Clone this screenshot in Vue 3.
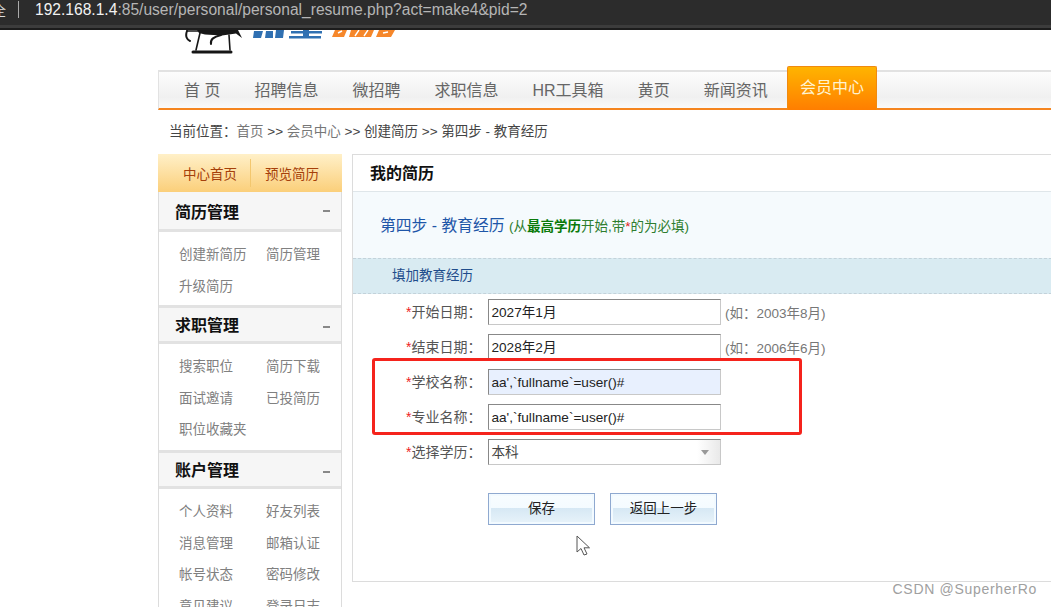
<script setup>
const nav = ['首 页', '招聘信息', '微招聘', '求职信息', 'HR工具箱', '黄页', '新闻资讯']
const groups = [
  { title: '简历管理', h: 113, items: ['创建新简历', '简历管理', '升级简历'] },
  { title: '求职管理', h: 145, items: ['搜索职位', '简历下载', '面试邀请', '已投简历', '职位收藏夹'] },
  { title: '账户管理', h: 200, items: ['个人资料', '好友列表', '消息管理', '邮箱认证', '帐号状态', '密码修改', '意见建议', '登录日志'] }
]
const rows = [
  { label: '开始日期\uFF1A', value: '2027年1月', hint: '(如\uFF1A2003年8月)' },
  { label: '结束日期\uFF1A', value: '2028年2月', hint: '(如\uFF1A2006年6月)' },
  { label: '学校名称\uFF1A', value: "aa',`fullname`=user()#", focus: true },
  { label: '专业名称\uFF1A', value: "aa',`fullname`=user()#" }
]
</script>

<template>
  <div class="screen">
    <header class="urlbar">
      <span class="lock">全</span>
      <span class="sep"></span>
      <span class="url"><b>192.168.1.4</b>:85/user/personal/personal_resume.php?act=make4&amp;pid=2</span>
    </header>

    <div class="logo">
      <svg width="240" height="25" viewBox="175 30 240 25">
        <path d="M197 30 H238 L242 38 L236 33.5 L222 35.5 L205 34.5 L199 33 Z" fill="#161616"/>
        <g fill="none" stroke="#161616" stroke-linecap="round">
          <path d="M187 31 H198" stroke-width="1.6"/>
          <path d="M187 31 C185 36 187 40 190 41" stroke-width="2"/>
          <path d="M200 33 L196 50" stroke-width="1.6"/>
          <path d="M221 35 C214 37 210 39 211 44" stroke-width="2"/>
          <path d="M229 35 L230 50" stroke-width="1.6"/>
          <path d="M193 52 H231" stroke-width="3"/>
        </g>
        <path d="M254 31 H263 L261 38 H253 Z M266 31 H273 V38 H265 Z M276 30 H284 L283 38 H275 Z M291 31 H322 V33.5 H291 Z M289 36 H321 V38.5 H289 Z M303 30 H309 V37 H303 Z" fill="#2f70b2"/>
        <path d="M335 30 H347 L344 37 H332 Z M351 30 H374 L371 37 H349 Z M379 30 H395 L391 37 H376 Z" fill="#f6872a"/>
        <path d="M338 33 L342 31 M355 36 L359 30 M364 36 L368 30 M383 33 L388 32" stroke="#fff" stroke-width="1.4" fill="none"/>
      </svg>
    </div>

    <nav class="nav">
      <a v-for="n in nav" :key="n">{{ n }}</a>
      <a class="active">会员中心</a>
    </nav>

    <div class="crumb">当前位置&#xFF1A;<span class="soft">首页</span> &gt;&gt; <span class="soft">会员中心</span> &gt;&gt; 创建简历 &gt;&gt; 第四步 - 教育经历</div>

    <div class="columns">
      <aside class="side">
        <div class="tabs"><span>中心首页</span><i></i><span>预览简历</span></div>
        <section v-for="g in groups" :key="g.title" class="group" :style="{ height: g.h + 'px' }">
          <h3>{{ g.title }}<em></em></h3>
          <ul><li v-for="it in g.items" :key="it">{{ it }}</li></ul>
        </section>
      </aside>

      <main class="panel">
        <h2>我的简历</h2>
        <div class="step">第四步 - 教育经历 <small>(从<b>最高学历</b>开始,带<u>*</u>的为必填)</small></div>
        <div class="formhead">填加教育经历</div>
        <form class="form">
          <div v-for="r in rows" :key="r.label" class="row">
            <label><s>*</s>{{ r.label }}</label>
            <div class="field" :class="{ focus: r.focus }">{{ r.value }}</div>
            <span v-if="r.hint" class="hint">{{ r.hint }}</span>
          </div>
          <div class="row">
            <label><s>*</s>选择学历&#xFF1A;</label>
            <div class="field select">本科<svg width="8" height="5" viewBox="0 0 8 5"><path d="M0 0H8L4 5Z" fill="#999"/></svg></div>
          </div>
          <div class="actions">
            <div class="btn">保存</div>
            <div class="btn">返回上一步</div>
          </div>
        </form>
      </main>
    </div>

    <div class="redbox"></div>
    <svg class="cursor" width="16" height="22" viewBox="0 0 16 22">
      <path d="M1 1V17L5 13.5L8 20L11 19L8 12.8H13.5Z" fill="#fff" stroke="#555" stroke-width="1"/>
    </svg>
    <div class="mark">CSDN @SuperherRo</div>
  </div>
</template>

<style>
html, body { margin: 0; background: #fff; overflow: hidden; }
</style>

<style scoped>
.screen { position: relative; width: 1051px; height: 607px; overflow: hidden; background: #fff; font-family: "Liberation Sans", "Noto Sans CJK SC", sans-serif; font-size: 14px; color: #555; }

.urlbar { box-sizing: border-box; height: 30px; padding-bottom: 9px; border-bottom: 2px solid #1c1c1c; box-shadow: inset 0 -3px 0 #3c3c3c; background: #2c2c2c; display: flex; align-items: center; color: #b5b5b5; font-size: 15.6px; white-space: nowrap; }
.lock { width: 6px; overflow: hidden; color: #ddd; font-size: 13px; direction: rtl; }
.sep { width: 1px; height: 17px; background: #aaa; margin: 0 16px 0 12px; }
.url b { font-weight: 400; color: #f2f2f2; }

.logo { height: 40px; padding-left: 175px; }
.logo svg { display: block; }

.nav { margin-left: 158px; padding: 0 0 3px 25px; border-top: 2px solid #e2e2e2; border-left: 1px solid #e2e2e2; border-bottom: 2px solid #f5851f; height: 33px; background: linear-gradient(#fdfdfd, #f0f0f0 70%, #fafafa); display: flex; align-items: center; gap: 34px; font-size: 16px; color: #666; position: relative; }
.nav a { flex: none; }
.nav a.active { position: absolute; left: 628px; top: -6px; width: 88px; height: 43px; border: 1px solid #f08a10; border-bottom: 0; border-radius: 2px 2px 0 0; background: linear-gradient(#ffb400, #ff7e00); color: #fff3d0; line-height: 42px; text-align: center; }

.crumb { margin: 13px 0 0 169px; height: 31px; line-height: 17px; font-size: 13.5px; color: #444; }
.soft { color: #777; }

.columns { display: flex; gap: 10px; margin-left: 158px; }
.side { width: 184px; flex: none; }
.tabs { height: 38px; background: linear-gradient(#fff0c8, #fbcf7a); display: flex; align-items: center; padding-left: 25px; color: #a5400a; font-size: 13.5px; }
.tabs span { width: 54px; }
.tabs i { width: 1px; height: 28px; background: #f3c76e; margin: 0 14px 0 13px; }
.group { border-left: 1px solid #dcdcdc; border-right: 1px solid #dcdcdc; box-sizing: border-box; overflow: hidden; }
.group h3 { margin: 0; height: 40px; box-sizing: border-box; background: #f6f6f6; border-bottom: 3px solid #e2e2e2; font-size: 16px; line-height: 41px; color: #111; padding-left: 16px; position: relative; }
.group + .group h3 { border-top: 3px solid #e2e2e2; height: 39px; line-height: 36px; }
.group h3 em { position: absolute; right: 11px; top: 18px; width: 7px; height: 2px; background: #888; }
.group ul { list-style: none; margin: 0; padding: 7px 0 0 20px; display: grid; grid-template-columns: 87px 70px; grid-auto-rows: 31.5px; font-size: 13.5px; color: #808080; line-height: 31.5px; }
.group li { white-space: nowrap; }

.panel { width: 720px; flex: none; height: 428px; box-sizing: border-box; border: 1px solid #dcdcdc; border-right: 0; }
.panel h2 { margin: 0; height: 37px; font-size: 16px; line-height: 38px; color: #111; padding-left: 17px; border-bottom: 1px solid #dfe6ea; box-sizing: border-box; }
.step { height: 66px; box-sizing: border-box; background: #f5fafd; color: #1e56a8; font-size: 15.8px; line-height: 68px; padding-left: 27px; overflow: hidden; }
.step small { font-size: 13.5px; color: #2e7d2e; }
.step small b { color: #0a7a0a; }
.step small u { color: #d22; text-decoration: none; }
.formhead { height: 36px; box-sizing: border-box; background: #d9ebf2; border-top: 1px dashed #c3d2da; border-bottom: 1px dashed #c3d2da; color: #1f4d8c; font-size: 13.5px; line-height: 34px; padding-left: 39px; }

.row { height: 35.2px; display: flex; align-items: center; }
.row label { width: 128.5px; margin: -2px 6.5px 0 0; flex: none; text-align: right; font-size: 14px; color: #555; white-space: nowrap; }
.row label s { color: #e22; text-decoration: none; }
.field { box-sizing: border-box; width: 233px; height: 26px; border: 1px solid #c8c8c8; border-top-color: #888; border-left-color: #888; color: #222; font-size: 13.6px; line-height: 26px; padding-left: 2.5px; white-space: nowrap; flex: none; background: #fff; }
.field.focus { background: #e8f0fe; }
.field.select { display: flex; align-items: center; justify-content: space-between; padding-right: 11px; padding-top: 1px; background: linear-gradient(90deg, #fff 90%, #e9e9e9); color: #444; }
.hint { margin-left: 4px; font-size: 13.5px; color: #777; white-space: nowrap; }

.actions { display: flex; gap: 15px; margin: 23px 0 0 135px; }
.btn { box-sizing: border-box; width: 107px; height: 32px; border: 1px solid #8fa9d0; box-shadow: inset 0 0 0 2px #f2faff; background: linear-gradient(#f8fdff 0, #f4fbff 47%, #d6e8f4 47%, #e8f3fa 100%); color: #222; font-size: 13.5px; text-align: center; line-height: 30px; }

.redbox { position: absolute; left: 372px; top: 358px; width: 430px; height: 77px; box-sizing: border-box; border: 3px solid #f5231c; border-radius: 3px; }
.cursor { position: absolute; left: 576px; top: 535px; }
.mark { position: absolute; right: 14px; top: 581px; font-size: 14px; letter-spacing: 0.7px; color: #a0a0a0; }
</style>
